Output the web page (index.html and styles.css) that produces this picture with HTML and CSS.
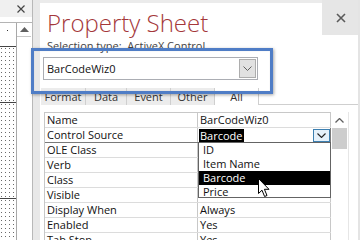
FILE: index.html
```html
<!DOCTYPE html>
<html lang="en">
<head>
  <meta charset="UTF-8">
  <title>Property Sheet</title>
  <link rel="stylesheet" href="styles.css">
</head>
<body>

  <div class="app">

    <div class="form-pane">
      <div class="form-head">
        <svg class="x-icon" width="8" height="8" viewBox="0 0 8 8"><path d="M0.5 0.5 L7.5 7.5 M7.5 0.5 L0.5 7.5" stroke="#444" stroke-width="1.2"/></svg>
      </div>
      <div class="form-body">
        <div class="grid">
          <div class="sec sec-head"><span class="dot"></span></div>
          <div class="sec sec-page"></div>
          <div class="sec sec-detail"></div>
          <div class="sec sec-foot"></div>
        </div>
        <div class="vscroll">
          <div class="vscroll-up">
            <svg width="9" height="5" viewBox="0 0 9 5"><path d="M0 5 L4.5 0 L9 5 Z" fill="#606060"/></svg>
          </div>
        </div>
      </div>
    </div>

    <div class="splitter"></div>

    <div class="sheet">
      <div class="sheet-head">
        <h1 class="sheet-title">Property Sheet</h1>
        <div class="sheet-close">
          <svg width="10" height="10" viewBox="0 0 10 10"><path d="M1 1 L9 9 M9 1 L1 9" stroke="#5a5a5a" stroke-width="1.6"/></svg>
        </div>
      </div>

      <div class="seltype">Selection type:&nbsp; ActiveX Control</div>

      <div class="combo">
        <span class="combo-text">BarCodeWiz0</span>
        <span class="combo-btn">
          <svg width="9" height="5" viewBox="0 0 9 5"><path d="M0.5 0.5 L4.5 4.5 L8.5 0.5" fill="none" stroke="#606060" stroke-width="1"/></svg>
        </span>
      </div>

      <div class="tabs">
        <div class="tab tab-format">Format</div>
        <div class="tab tab-data">Data</div>
        <div class="tab tab-event">Event</div>
        <div class="tab tab-other">Other</div>
        <div class="tab tab-all">All</div>
        <div class="tab-rest"></div>
      </div>

      <div class="props">
        <div class="prop-table">
          <div class="row"><span class="label">Name</span><span class="value">BarCodeWiz0</span></div>
          <div class="row row-edit">
            <span class="label">Control Source</span>
            <span class="value value-edit">
              <span class="picked">Barcode</span>
              <span class="edit-btn">
                <svg width="9" height="5" viewBox="0 0 9 5"><path d="M0.5 0.5 L4.5 4.5 L8.5 0.5" fill="none" stroke="#222" stroke-width="1.1"/></svg>
              </span>
            </span>
          </div>
          <div class="row"><span class="label">OLE Class</span><span class="value"></span></div>
          <div class="row"><span class="label">Verb</span><span class="value"></span></div>
          <div class="row"><span class="label">Class</span><span class="value"></span></div>
          <div class="row"><span class="label">Visible</span><span class="value"></span></div>
          <div class="row"><span class="label">Display When</span><span class="value">Always</span></div>
          <div class="row"><span class="label">Enabled</span><span class="value">Yes</span></div>
          <div class="row"><span class="label">Tab Stop</span><span class="value">Yes</span></div>
        </div>
        <div class="prop-scroll">
          <div class="prop-scroll-up">
            <svg width="9" height="5" viewBox="0 0 9 5"><path d="M0.5 4.5 L4.5 0.5 L8.5 4.5" fill="none" stroke="#606060" stroke-width="1.3"/></svg>
          </div>
          <div class="prop-scroll-thumb"></div>
        </div>
      </div>

      <ul class="dropdown">
        <li>ID</li>
        <li>Item Name</li>
        <li class="selected">Barcode</li>
        <li>Price</li>
      </ul>

      <svg class="cursor" width="13" height="20" viewBox="0 0 13 20"><path d="M0.5 0.5 L0.5 15.5 L4 12.2 L6.6 18.5 L9 17.5 L6.4 11.3 L11 11.3 Z" fill="#fff" stroke="#000" stroke-width="1" stroke-linejoin="round"/></svg>

      <div class="highlight"></div>
    </div>

  </div>

</body>
</html>
```

FILE: styles.css
```css
body {
  margin: 0;
  font-family: "Open Sans", "Noto Sans", sans-serif;
  background-color: #fff;
}
.app {
  display: flex;
  width: 360px;
  height: 240px;
  overflow: hidden;
}

/* form design pane on the left */
.form-pane {
  width: 32px;
  display: flex;
  flex-direction: column;
  background-color: #fff;
}
.form-head {
  height: 17px;
  background-color: #f0f0f0;
  display: flex;
  justify-content: flex-end;
  align-items: center;
  padding-right: 7px;
}
.form-body {
  flex: 1;
  display: flex;
  margin-top: 5px;
  border-top: 1px solid #b4b4b4;
}
.grid {
  width: 16px;
  display: flex;
  flex-direction: column;
  border-right: 1px solid #a8a8a8;
}
.sec {
  border-bottom: 1px solid #444;
  background-image: radial-gradient(circle at 1.5px 1.5px, #6a6a6a 0.7px, transparent 1px);
  background-size: 4px 4px;
}
.sec-head {
  height: 23px;
  background-image: none;
  position: relative;
}
.dot {
  position: absolute;
  left: 7px;
  top: 7px;
  width: 1px;
  height: 1px;
  background-color: #333;
}
.sec-page {
  height: 55px;
}
.sec-detail {
  height: 95px;
}
.sec-foot {
  flex: 1;
  border-bottom: none;
}
.vscroll {
  width: 14px;
  background-color: #fff;
}
.vscroll-up {
  height: 13px;
  display: flex;
  justify-content: center;
  align-items: center;
  border-bottom: 1px solid #c8c8c8;
}

.splitter {
  width: 7px;
  background-color: #e8e8e8;
  border-left: 1px solid #b8b8b8;
}

/* property sheet */
.sheet {
  flex: 1;
  position: relative;
  background-color: #fff;
  border-right: 2px solid #e4e4e4;
}
.sheet-head {
  display: flex;
  height: 35px;
}
.sheet-title {
  flex: 1;
  margin: 0;
  padding: 7px 0 0 7px;
  border-top: 3px solid #ebebeb;
  font-size: 24px;
  font-weight: 300;
  line-height: 25px;
  color: #a4373a;
}
.sheet-close {
  width: 36px;
  background-color: #e6e6e6;
  display: flex;
  justify-content: center;
  align-items: center;
  padding-left: 2px;
  box-sizing: border-box;
}
.seltype {
  margin: 4px 0 0 7px;
  font-size: 11px;
  line-height: 14px;
  color: #444;
}
.combo {
  display: flex;
  align-items: center;
  justify-content: space-between;
  margin: 4px 0 0 3px;
  width: 215px;
  height: 23px;
  box-sizing: border-box;
  border: 1px solid #abadb3;
  padding: 0 1px 0 3px;
}
.combo-text {
  font-size: 11px;
  color: #111;
}
.combo-btn {
  width: 17px;
  height: 19px;
  box-sizing: border-box;
  background-color: #e1e1e1;
  border: 1px solid #adadad;
  display: flex;
  justify-content: center;
  align-items: center;
}

.tabs {
  display: flex;
  margin-top: 8px;
  height: 17px;
  padding-left: 1px;
}
.tab {
  font-size: 11px;
  line-height: 17px;
  color: #333;
  text-align: center;
  background-color: #ececec;
  border-right: 1px solid #cfcfcf;
  box-sizing: border-box;
}
.tab-format { width: 45px; }
.tab-data { width: 41px; }
.tab-event { width: 44px; }
.tab-other { width: 43px; border-right: none; }
.tab-all {
  width: 45px;
  background-color: #fff;
  border-left: 1px solid #cfcfcf;
  border-right: 1px solid #cfcfcf;
}
.tab-rest {
  flex: 1;
  border-bottom: 1px solid #cfcfcf;
}

.props {
  display: flex;
  margin: 7px 0 0 4px;
}
.prop-table {
  width: 287px;
  border-top: 1px solid #c8c8c8;
  border-left: 1px solid #c8c8c8;
  box-sizing: border-box;
}
.row {
  display: flex;
  height: 15px;
  box-sizing: border-box;
  border-bottom: 1px solid #dcdcdc;
  font-size: 11px;
  line-height: 14px;
  color: #111;
}
.label {
  width: 153px;
  padding-left: 2px;
  box-sizing: border-box;
  border-right: 1px solid #c8c8c8;
}
.value {
  flex: 1;
  padding-left: 2px;
  border-right: 1px solid #c8c8c8;
}
.row-edit {
  border-bottom-color: #7a7a7a;
}
.value-edit {
  display: flex;
  justify-content: space-between;
  align-items: center;
  padding-left: 1px;
  border-right-color: #7a7a7a;
}
.picked {
  background-color: #000;
  color: #fff;
  padding: 0 1px;
  line-height: 13px;
}
.edit-btn {
  width: 17px;
  height: 13px;
  box-sizing: border-box;
  border: 1px solid #3c7fb1;
  background-color: #e5f1fb;
  display: flex;
  justify-content: center;
  align-items: center;
}
.prop-scroll {
  width: 17px;
  background-color: #fff;
  border-right: 1px solid #e6e6e6;
}
.prop-scroll-up {
  height: 16px;
  display: flex;
  justify-content: center;
  align-items: center;
}
.prop-scroll-thumb {
  margin: 0 1px;
  height: 21px;
  background-color: #cdcdcd;
}

/* open drop-down list of the Control Source row */
.dropdown {
  position: absolute;
  left: 158px;
  top: 142px;
  width: 133px;
  height: 56px;
  margin: 0;
  padding: 0;
  list-style-type: none;
  box-sizing: border-box;
  border: 1px solid #646464;
  background-color: #fff;
}
.dropdown li {
  height: 14px;
  padding-left: 4px;
  font-size: 11px;
  line-height: 14px;
  color: #111;
}
.dropdown li.selected {
  background-color: #000;
  color: #fff;
}
.cursor {
  position: absolute;
  left: 218px;
  top: 178px;
}

/* blue call-out box drawn over the selector */
.highlight {
  position: absolute;
  left: -9px;
  top: 48px;
  width: 236px;
  height: 40px;
  border: 3px solid #4f7dc6;
  box-shadow: 1px 1px 3px rgba(0, 0, 0, 0.35), inset 0 0 1px rgba(0, 0, 0, 0.2);
}
```
